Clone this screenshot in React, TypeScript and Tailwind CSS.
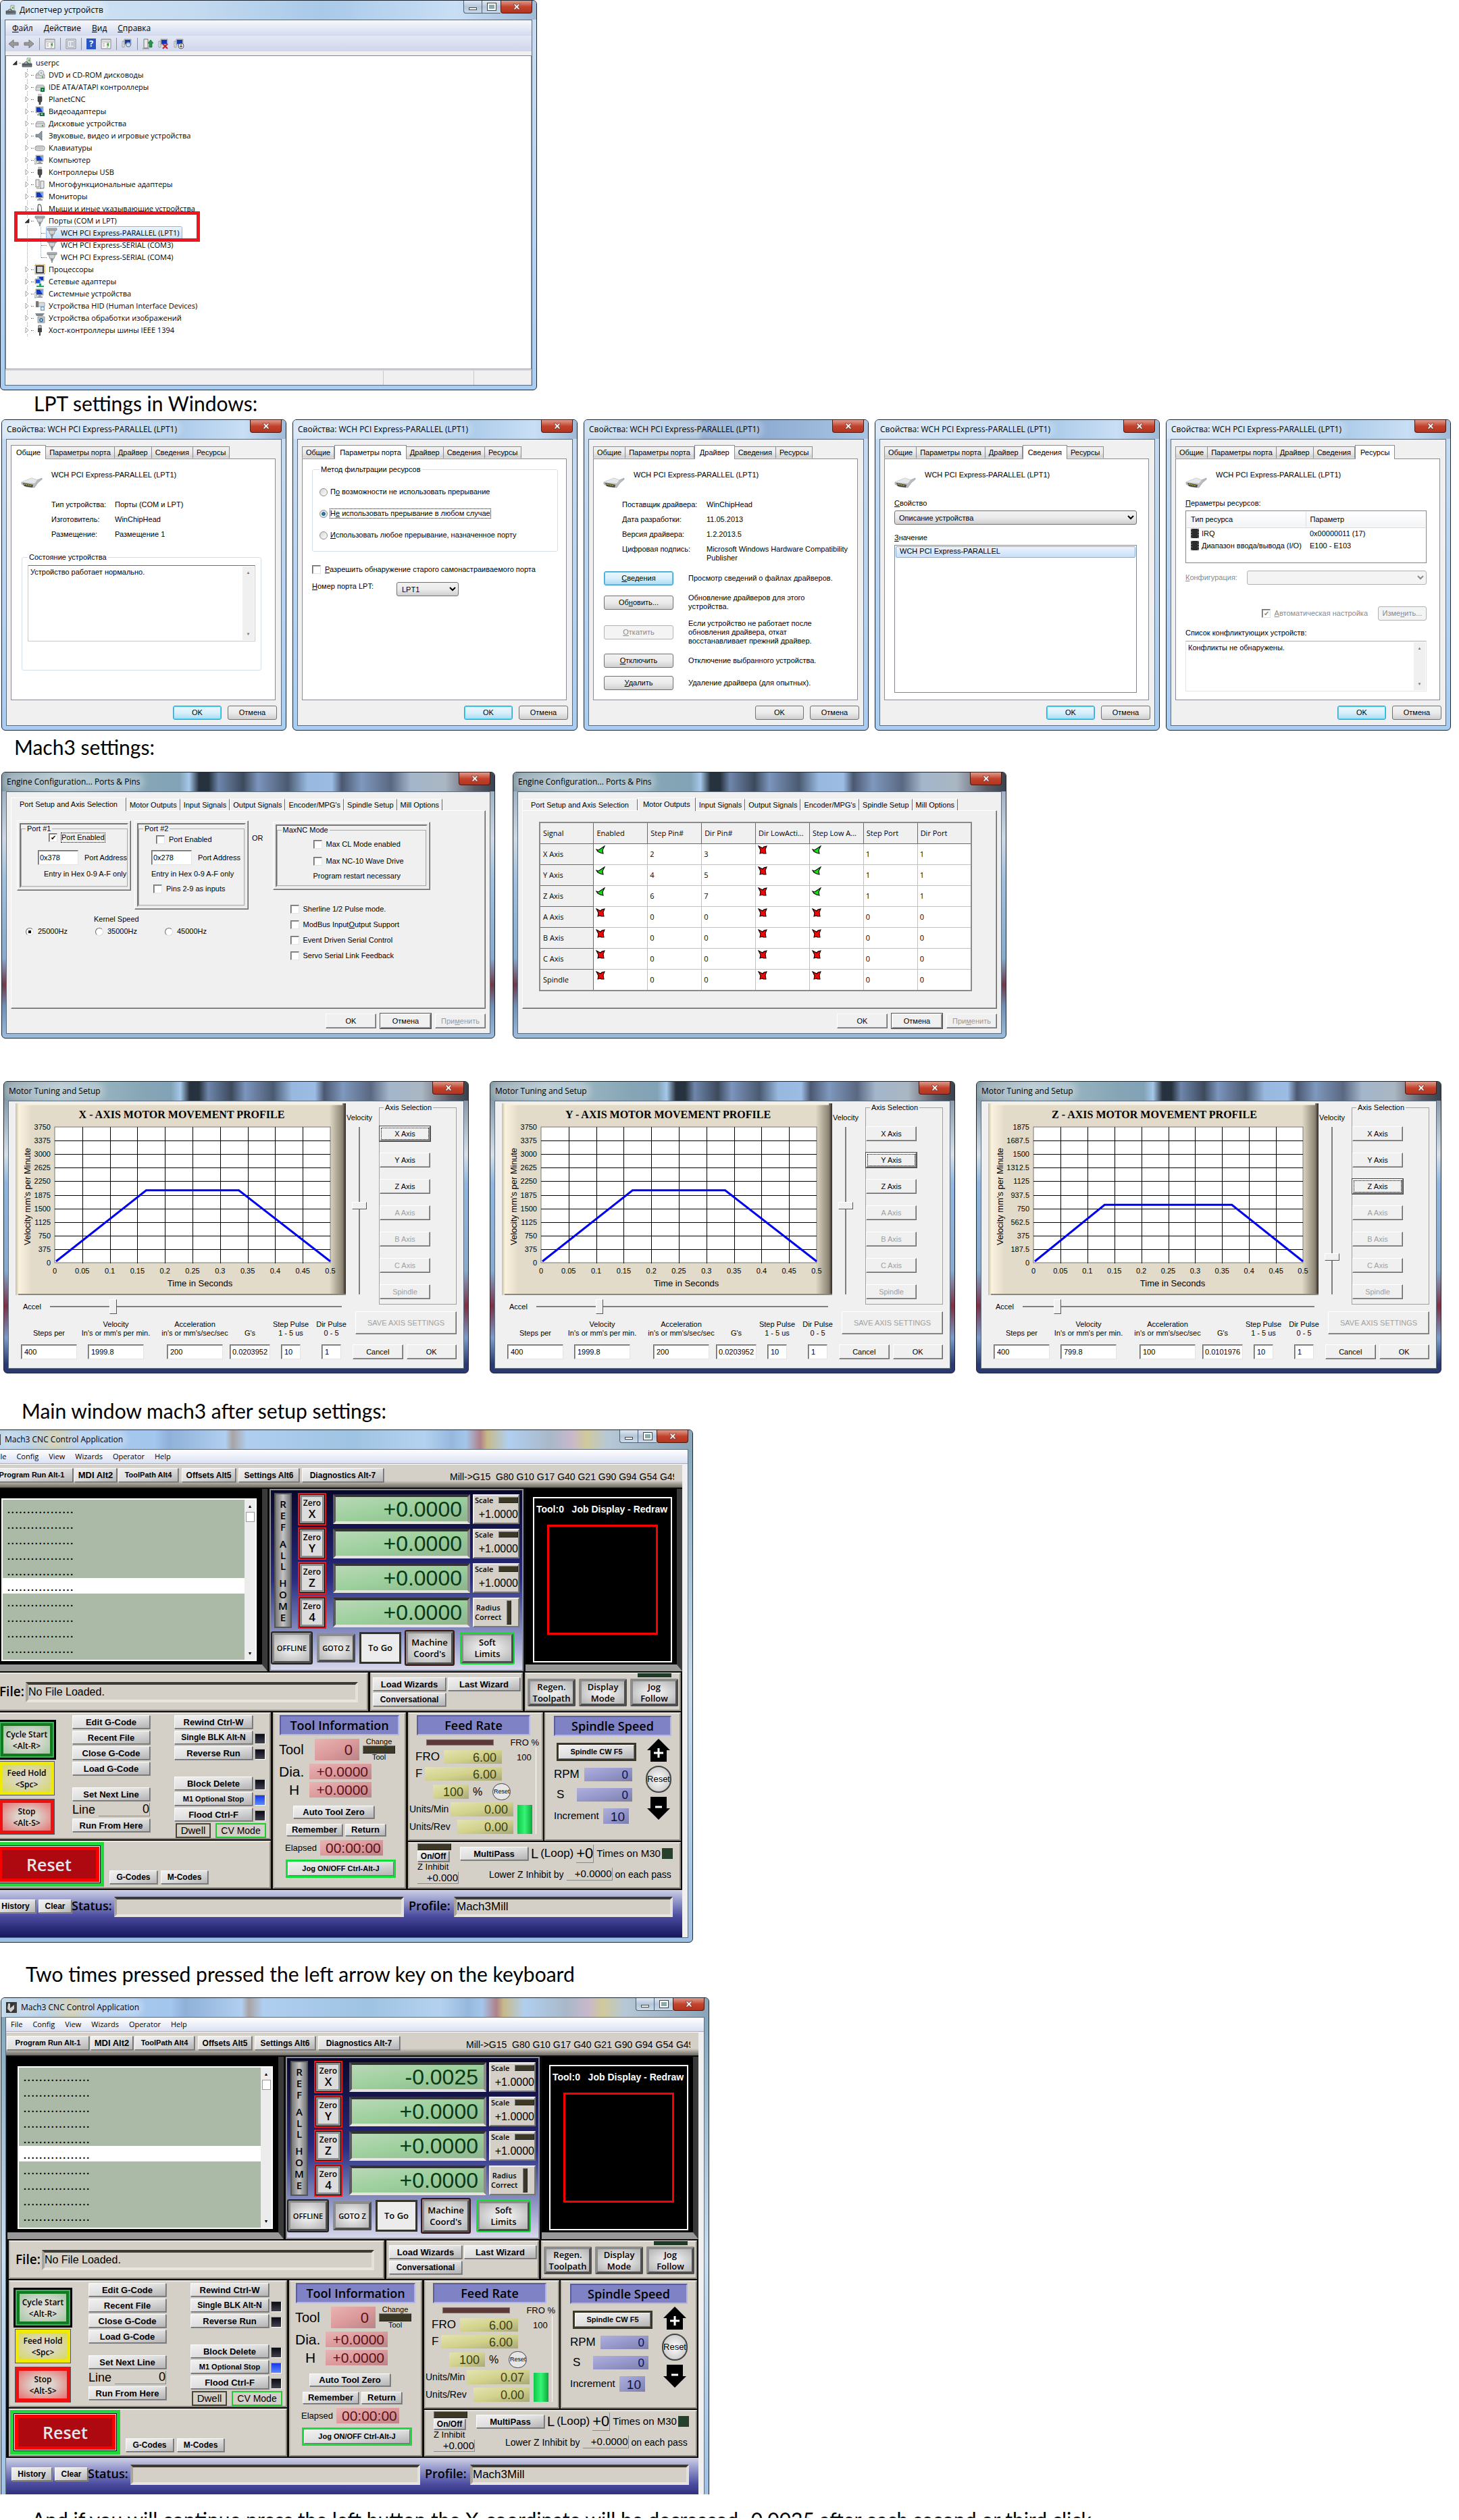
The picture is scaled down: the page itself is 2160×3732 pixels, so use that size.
import React from "react";
import clsx from "clsx";

const segoe = "font-['Open_Sans',sans-serif]";
const arial = "font-['Liberation_Sans',Arial,sans-serif]";

const raised =
  "border border-t-white border-l-white border-r-[#696969] border-b-[#696969] bg-[#f0f0f0] shadow-[inset_-1px_-1px_0_#a0a0a0]";
const sunken =
  "border border-t-[#696969] border-l-[#696969] border-r-[#e3e3e3] border-b-[#e3e3e3] bg-white shadow-[inset_1px_1px_0_#a0a0a0]";
const aeroButton =
  "h-[21px] rounded-[3px] border border-[#707070] bg-linear-to-b from-[#f2f2f2] via-[#ebebeb] to-[#cfcfcf] text-center";
const aeroDefault =
  "h-[21px] rounded-[3px] border border-[#3c9fcb] bg-linear-to-b from-[#eaf6fd] via-[#d9f0fc] to-[#a9daf2] text-center shadow-[inset_0_0_0_1px_#48d3f5]";

/* ---------- window chrome ---------- */

type FrameProps = {
  title: string;
  header: string;
  frame: string;
  full?: boolean;
  icon?: React.ReactNode;
  className?: string;
  children: React.ReactNode;
};

function CloseButton() {
  return (
    <button
      aria-label="Close"
      className="flex h-[19px] w-[47px] items-center justify-center rounded-b-[4px] border border-t-0 border-[#4a1a14] bg-linear-to-b from-[#dd9a8c] via-[#c3422c] to-[#b3341f]"
    >
      <svg viewBox="0 0 12 10" className="h-[10px] w-[12px]">
        <path
          d="M1 1h3l2 2.4L8 1h3L7.800 5 11 9H8L6 6.600 4 9H1l3.200-4z"
          fill="#fff"
          stroke="#5a3030"
          strokeWidth=".7"
        />
      </svg>
    </button>
  );
}

function Frame({ title, header, frame, full, icon, className, children }: FrameProps) {
  return (
    <section
      className={clsx(
        "flex flex-col overflow-hidden rounded-[6px] border border-[#1d2733] text-black",
        frame,
        className
      )}
    >
      <header className={clsx("flex h-[28px] shrink-0 items-start pr-[6px] pl-[7px]", header)}>
        {icon}
        <h2 className={`${segoe} mt-[5px] flex-1 text-[12px] leading-[18px] whitespace-nowrap`}>
          <span className="rounded-full bg-white/25 shadow-[0_0_8px_6px_rgba(255,255,255,0.25)]">
            {title}
          </span>
        </h2>
        {full && (
          <div className="flex h-[19px] overflow-hidden rounded-bl-[4px] border border-t-0 border-r-0 border-[#4c5f75] bg-linear-to-b from-[#dfe8f2] via-[#b5c6da] to-[#cbdaea]">
            <button aria-label="Minimize" className="flex w-[27px] justify-center border-r border-[#4c5f75] pt-[10px]">
              <span className="h-[4px] w-[12px] border border-[#444] bg-white" />
            </button>
            <button aria-label="Maximize" className="flex w-[27px] items-center justify-center">
              <span className="h-[10px] w-[12px] border-2 border-white bg-[#8aa] outline outline-[#444]" />
            </button>
          </div>
        )}
        <CloseButton />
      </header>
      <div className="mx-[6px] mb-[6px] flex flex-1 flex-col border border-[#5c6b7c] bg-[#f0f0f0]">
        {children}
      </div>
    </section>
  );
}

const aeroHeader =
  "bg-[linear-gradient(90deg,#d5e5f5_0%,#c5dbf0_35%,#a9c9e8_60%,#c9dff5_85%,#9fb9d6_100%)]";
const aeroFrame = "bg-linear-to-b from-[#c8dcf0] via-[#b9d5f2] to-[#a9cdf2]";
const machHeader =
  "bg-[linear-gradient(90deg,#7f95a0_0%,#a9c0ca_12%,#86a6b6_30%,#82a3b6_36%,#a6c8ea_38%,#26323d_40%,#26323d_42%,#6f86ab_44%,#3d4a5c_49%,#7c95bd_52%,#4a5a70_58%,#98b8e0_62%,#9cbce4_67%,#4b5870_69%,#7f98bd_73%,#5a6882_79%,#a3b6cb_83%,#aab6c2_90%,#5c5c66_96%,#39424f_100%)]";
const engineFrame =
  "bg-[linear-gradient(#8fa2b5_0%,#cdd8e2_25%,#a0c0dd_40%,#86abcd_70%,#703848_80%,#6f8fb5_88%,#9cbcdc_100%)]";
const motorFrame =
  "bg-[linear-gradient(#6f8294_0%,#d6e0e8_25%,#8fb6dc_35%,#86abcd_65%,#7b3045_77%,#7a9cc8_88%,#2b3a6e_97%)]";

/* ---------- form pieces ---------- */

function Check({ children, className, ...rest }: React.InputHTMLAttributes<HTMLInputElement>) {
  return (
    <label className={clsx("flex items-center whitespace-nowrap", className)}>
      <input
        type="checkbox"
        readOnly
        {...rest}
        className={`${sunken} relative mr-[6px] h-[13px] w-[13px] shrink-0 appearance-none checked:before:absolute checked:before:left-[2px] checked:before:text-[10px] checked:before:leading-[11px] checked:before:content-['✔']`}
      />
      {children}
    </label>
  );
}

function Tabs({ names, active }: { names: string[]; active: number }) {
  return (
    <div role="tablist" className="flex h-[21px] items-end">
      {names.map((name, i) => (
        <button
          key={name}
          role="tab"
          aria-selected={i === active}
          className={
            i === active
              ? "relative z-10 -mb-px h-[21px] border border-b-0 border-[#898c95] bg-white px-[7px] whitespace-nowrap"
              : "h-[18px] border border-l-0 border-[#898c95] border-b-transparent bg-linear-to-b from-[#f2f2f2] via-[#ebebeb] to-[#cfcfcf] px-[5px] whitespace-nowrap first:border-l"
          }
        >
          {name}
        </button>
      ))}
    </div>
  );
}

/* ---------- device manager ---------- */

type IconKind =
  | "pc" | "dvd" | "ide" | "usb" | "video" | "disk" | "sound" | "keyboard" | "system"
  | "multi" | "monitor" | "mouse" | "port" | "cpu" | "network" | "hid" | "camera" | "host";

function DeviceIcon({ kind }: { kind: IconKind }) {
  const screen = (
    <>
      <path d="M2 1h11v9H2z" fill="#c8ccd0" stroke="#777" strokeWidth=".6" />
      <path d="M3 2h9v7H3z" fill="#1238b8" />
      <path d="M8 2h4v7z" fill="#6f9cf0" />
      <path d="M6 10h4v2H6zM4 12h8v2H4z" fill="#9a9fa4" />
    </>
  );
  const drive = (
    <>
      <path d="M2 8l2-3h9l2 3v5H2z" fill="#d8dadc" stroke="#777" strokeWidth=".7" />
      <path d="M2 8h13" stroke="#888" strokeWidth=".7" />
      <path d="M11 10h2v2h-2z" fill="#33b033" />
    </>
  );
  return (
    <svg viewBox="0 0 16 16" className="h-[16px] w-[16px] shrink-0">
      {kind === "pc" && (
        <>
          <path d="M8 1h5v8H8z" fill="#e4e7ea" stroke="#777" strokeWidth=".7" />
          <path d="M10 3h2v3h-2z" fill="#4bbd3a" />
          <path d="M1 9h14v5H1z" fill="#75828e" stroke="#444" strokeWidth=".7" />
          <path d="M4 9c0-3 6-3 6 0M1 11h14" fill="none" stroke="#333" />
        </>
      )}
      {kind === "dvd" && (
        <>
          {drive}
          <circle cx="10" cy="5" r="4" fill="#dfe6ea" stroke="#889" strokeWidth=".7" />
          <circle cx="10" cy="5" r="1.200" fill="#9a9" />
        </>
      )}
      {kind === "ide" && (
        <>
          {drive}
          <path d="M9 9h6v6H9z" fill="#0c7a3a" />
          <path d="M11 11h2v2h-2z" fill="#8fd0a0" />
        </>
      )}
      {kind === "disk" && drive}
      {kind === "usb" && (
        <>
          <path d="M6 0h4v4H6z" fill="#d5d5d5" stroke="#888" strokeWidth=".6" />
          <path d="M5 4h6v7l-2 2v3H7v-3l-2-2z" fill="#4a4a4e" stroke="#222" strokeWidth=".5" />
        </>
      )}
      {kind === "host" && (
        <>
          <path d="M6 1h4v4H6z" fill="#d5d5d5" stroke="#555" />
          <path d="M5 5h6v6H5zM7 11h2v5H7z" fill="#444" />
        </>
      )}
      {kind === "video" && (
        <>
          {screen}
          <path d="M8 10h7v5H8z" fill="#0c7a3a" />
          <path d="M10 11h2v2h-2z" fill="#bfe0c4" />
        </>
      )}
      {kind === "sound" && <path d="M2 6h4l5-5v14l-5-5H2z" fill="#8c99a3" stroke="#55606a" strokeWidth=".7" />}
      {kind === "keyboard" && (
        <>
          <rect x="1" y="5" width="14" height="7" rx="3" fill="#dcdcdc" stroke="#777" strokeWidth=".8" />
          <path d="M3 7h10M3 9h10" stroke="#888" strokeDasharray="1 1" />
        </>
      )}
      {(kind === "system" || kind === "monitor") && screen}
      {kind === "system" && <path d="M0 6h3v8H0z" fill="#dfe2e4" stroke="#777" strokeWidth=".6" />}
      {kind === "multi" && (
        <path d="M2 1h5v11H2zM9 3h5v11H9zM3 14h7" fill="#e6e8ea" stroke="#777" strokeWidth=".9" />
      )}
      {kind === "mouse" && (
        <>
          <path d="M5 2c4-3 6 2 6 6s1 7 3 7H2c3-2 2-9 3-13z" fill="#55585c" />
          <path d="M6 3c2-2 4 1 4 5s-1 6-2 6-3-7-2-11z" fill="#f0f0f0" />
        </>
      )}
      {kind === "port" && (
        <>
          <path d="M1 1h14v3H1z" fill="#b4b8bb" stroke="#6a6f73" strokeWidth=".7" />
          <path d="M3 4h10l-2 6H5z" fill="#d0d3d5" stroke="#6a6f73" strokeWidth=".7" />
          <path d="M6 10h4v3H6zM7 13h2v3H7z" fill="#8f9599" />
        </>
      )}
      {kind === "cpu" && (
        <>
          <path d="M1 1h14v14H1z" fill="none" stroke="#b8862c" strokeWidth="1.500" strokeDasharray="1 1" />
          <path d="M2 2h12v12H2z" fill="#3e4246" />
          <path d="M4 4h8v8H4z" fill="#d3d6d8" />
        </>
      )}
      {kind === "network" && (
        <>
          <path d="M5 0h9v7H5z" fill="#c8ccd0" stroke="#777" strokeWidth=".6" />
          <path d="M7 1h6v5H7z" fill="#1238b8" />
          <path d="M1 4h8v7H1z" fill="#c8ccd0" stroke="#777" strokeWidth=".6" />
          <path d="M2 5h6v5H2z" fill="#1c50d8" />
          <path d="M7 11h3v3h4v2H3v-2h4z" fill="#22a75a" />
        </>
      )}
      {kind === "hid" && (
        <>
          <path d="M2 1h4v9H2z" fill="#777" />
          <path d="M6 3h9v6H6z" fill="#d8dadd" stroke="#777" strokeWidth=".6" />
          <path d="M9 9h6v6H9z" fill="#6f9fc8" />
          <circle cx="12" cy="12" r="2" fill="#eee" />
        </>
      )}
      {kind === "camera" && (
        <>
          <path d="M1 1h14l-3 4H3z" fill="#7f868c" />
          <path d="M5 6h10v9H5z" fill="#c3c9ce" stroke="#666" strokeWidth=".6" />
          <circle cx="10" cy="11" r="3" fill="#3977a8" />
          <circle cx="10" cy="11" r="1.200" fill="#cfe6f5" />
        </>
      )}
    </svg>
  );
}

type Device = { name: string; icon: IconKind; children?: string[] };

const devices: Device[] = [
  { name: "DVD и CD-ROM дисководы", icon: "dvd" },
  { name: "IDE ATA/ATAPI контроллеры", icon: "ide" },
  { name: "PlanetCNC", icon: "usb" },
  { name: "Видеоадаптеры", icon: "video" },
  { name: "Дисковые устройства", icon: "disk" },
  { name: "Звуковые, видео и игровые устройства", icon: "sound" },
  { name: "Клавиатуры", icon: "keyboard" },
  { name: "Компьютер", icon: "system" },
  { name: "Контроллеры USB", icon: "usb" },
  { name: "Многофункциональные адаптеры", icon: "multi" },
  { name: "Мониторы", icon: "monitor" },
  { name: "Мыши и иные указывающие устройства", icon: "mouse" },
  {
    name: "Порты (COM и LPT)",
    icon: "port",
    children: [
      "WCH PCI Express-PARALLEL (LPT1)",
      "WCH PCI Express-SERIAL (COM3)",
      "WCH PCI Express-SERIAL (COM4)",
    ],
  },
  { name: "Процессоры", icon: "cpu" },
  { name: "Сетевые адаптеры", icon: "network" },
  { name: "Системные устройства", icon: "system" },
  { name: "Устройства HID (Human Interface Devices)", icon: "hid" },
  { name: "Устройства обработки изображений", icon: "camera" },
  { name: "Хост-контроллеры шины IEEE 1394", icon: "host" },
];

function TreeArrow({ open }: { open?: boolean }) {
  return (
    <svg viewBox="0 0 10 10" className="h-[10px] w-[10px] shrink-0 bg-white">
      {open ? (
        <path d="M8 2v6H2z" fill="#333" stroke="#111" strokeWidth=".6" />
      ) : (
        <path d="M3 1l4 4-4 4z" fill="#fff" stroke="#a0a0a0" />
      )}
    </svg>
  );
}

function Toolbar() {
  const sep = <span className="h-[18px] w-px bg-[#8c8f98]" />;
  const list = (
    <svg viewBox="0 0 16 16" className="h-[16px] w-[16px]">
      <path d="M1 1h14v14H1z" fill="#f6f6f6" stroke="#888" />
      <path d="M1 2h14M2 5h12M10 6v8M3 8h3M3 11h3" stroke="#999" />
      <path d="M12 6v6L9 9z" fill="#3aa52f" />
    </svg>
  );
  const scan = (mark: React.ReactNode) => (
    <svg viewBox="0 0 16 16" className="h-[16px] w-[16px]">
      <path d="M1 4h3v9H1z" fill="#dfe2e4" stroke="#777" strokeWidth=".6" />
      <path d="M4 1h10v8H4z" fill="#c8ccd0" stroke="#777" strokeWidth=".6" />
      <path d="M5 2h8v6H5z" fill="#1238b8" />
      {mark}
    </svg>
  );
  return (
    <div className="flex h-[23px] items-center gap-[7px] bg-linear-to-b from-[#e4e8f4] to-[#cfd6ec] pl-[4px]">
      <svg viewBox="0 0 16 16" className="h-[16px] w-[16px]">
        <path d="M1 8l7-6v4h7v4H8v4z" fill="#9b9b9b" stroke="#777" />
      </svg>
      <svg viewBox="0 0 16 16" className="h-[16px] w-[16px]">
        <path d="M15 8L8 2v4H1v4h7v4z" fill="#9b9b9b" stroke="#777" />
      </svg>
      {sep}
      {list}
      {sep}
      <svg viewBox="0 0 16 16" className="h-[16px] w-[16px]">
        <path d="M1 1h14v14H1z" fill="#f6f6f6" stroke="#888" />
        <path d="M3 3h10v10H3zM5 6h2M8 6h4M5 8h2M8 8h4M5 10h2M8 10h4" fill="none" stroke="#8a99b0" />
      </svg>
      {sep}
      <span className="flex h-[16px] w-[14px] items-center justify-center bg-[#2a55c4] text-[13px] font-bold text-white">
        ?
      </span>
      {list}
      {sep}
      {scan(<circle cx="10" cy="9" r="3.500" fill="#cfe2f2" fillOpacity=".8" stroke="#667" />)}
      {sep}
      <svg viewBox="0 0 16 16" className="h-[16px] w-[16px]">
        <path d="M2 1h6v13H2zM0 15h10" fill="#e6e8ea" stroke="#777" />
        <path d="M12 2l4 5h-2v6h-4V7H8z" fill="#1f9a3f" stroke="#0b5c22" strokeWidth=".6" />
      </svg>
      {scan(<path d="M7 8l7 7M14 8l-7 7" stroke="#e01818" strokeWidth="2.200" />)}
      {scan(
        <>
          <circle cx="11" cy="11" r="4" fill="#eee" stroke="#555" />
          <path d="M11 8v5M9 11l2 2 2-2" fill="none" stroke="#333" />
        </>
      )}
    </div>
  );
}

function DeviceManager() {
  return (
    <Frame
      title="Диспетчер устройств"
      header={aeroHeader}
      frame={aeroFrame}
      full
      className="h-[578px] w-full max-w-[795px]"
      icon={
        <span className="mt-[6px] mr-[5px]">
          <DeviceIcon kind="pc" />
        </span>
      }
    >
      <nav className={`${segoe} flex h-[23px] items-center gap-[16px] bg-linear-to-b from-[#f7f8fc] to-[#d3daee] pl-[10px] text-[12px]`}>
        <a href="#file"><u>Ф</u>айл</a>
        <a href="#action"><u>Д</u>ействие</a>
        <a href="#view"><u>В</u>ид</a>
        <a href="#help"><u>С</u>правка</a>
      </nav>
      <Toolbar />
      <div className={`${segoe} relative mt-[6px] flex-1 border border-[#828790] bg-white pt-px text-[11px] leading-[18px] whitespace-nowrap`}>
        <div className="flex h-[18px] items-center pl-[8px]">
          <TreeArrow open />
          <span className="mr-[1px] ml-[1px] w-[3px] border-t border-dotted border-gray-500" />
          <DeviceIcon kind="pc" />
          <span className="ml-[5px]">userpc</span>
        </div>
        <ul className="ml-[31px] border-l border-dotted border-gray-400">
          {devices.map((d) => (
            <li key={d.name} className="-ml-[6px]">
              <div className="flex h-[18px] items-center">
                <TreeArrow open={!!d.children} />
                <span className="mr-[1px] ml-[1px] w-[4px] border-t border-dotted border-gray-500" />
                <DeviceIcon kind={d.icon} />
                <span className="ml-[5px]">{d.name}</span>
              </div>
              {d.children && (
                <ul className="mb-[9px] ml-[25px] h-[45px] border-l border-dotted border-gray-400">
                  {d.children.map((name, i) => (
                    <li key={name} className="flex h-[18px] items-center">
                      <span className="w-[8px] border-t border-dotted border-gray-500" />
                      <span
                        className={clsx(
                          "flex h-[18px] items-center rounded-[2px] pr-[3px]",
                          i === 0 &&
                            "bg-linear-to-b from-[#ecf4fd] to-[#c6dffa] shadow-[0_0_0_1px_#8fb8e6]"
                        )}
                      >
                        <DeviceIcon kind="port" />
                        <span className="ml-[5px]">{name}</span>
                      </span>
                    </li>
                  ))}
                </ul>
              )}
            </li>
          ))}
        </ul>
        {/* marks the port that has to be configured */}
        <div className="absolute top-[230px] left-[12px] h-[45px] w-[275px] border-[5px] border-[#ee1520]" />
      </div>
      <footer className="mt-px flex h-[22px] justify-end border-t border-[#d0d0d0]">
        <span className="w-[134px] border-l border-[#c8c8c8]" />
        <span className="w-[86px] border-x border-[#c8c8c8]" />
      </footer>
    </Frame>
  );
}

/* ---------- port property sheets ---------- */

const sheetTabs = ["Общие", "Параметры порта", "Драйвер", "Сведения", "Ресурсы"];

function Sheet({ active, plainOk, children }: { active: number; plainOk?: boolean; children: React.ReactNode }) {
  return (
    <Frame
      title="Свойства: WCH PCI Express-PARALLEL (LPT1)"
      header={
        active === 2
          ? "bg-[linear-gradient(90deg,#c9dcf0_0%,#a3bcd8_40%,#7f9fc8_42%,#a9c4e4_100%)]"
          : aeroHeader
      }
      frame={aeroFrame}
      className="h-[461px] max-w-[422px] flex-1"
    >
      <div className={`${arial} flex flex-1 flex-col px-[6px] pt-[7px] pb-[8px] text-[11px] leading-[13px]`}>
        <Tabs names={sheetTabs} active={active} />
        <div className="mr-[2px] flex flex-1 flex-col border border-[#898c95] bg-white">{children}</div>
        <div className="mt-[8px] flex justify-end gap-[9px]">
          <button className={clsx(plainOk ? aeroButton : aeroDefault, "w-[72px]")}>OK</button>
          <button className={clsx(aeroButton, "w-[73px]")}>Отмена</button>
        </div>
      </div>
    </Frame>
  );
}

function PortHeader() {
  return (
    <div className="flex h-[56px] shrink-0 pt-[17px] pl-[14px]">
      <svg viewBox="0 0 32 16" className="mt-[10px] h-[16px] w-[32px]">
        <path d="M1 7l15-6 8 3 7-3v2l-6 5-5 7-12-1L1 10z" fill="#b9bdc2" stroke="#8b9096" strokeWidth=".6" />
        <path d="M1 7l15-6 8 3-4 5z" fill="#e6e8ea" />
        <path d="M3 8l15 3-1 4-12-2z" fill="#44463a" />
        <path d="M5 10l11 2.500" stroke="#d6d24a" strokeWidth="1.500" strokeDasharray="1.500 1.200" />
      </svg>
      <span className="ml-[13px]">WCH PCI Express-PARALLEL (LPT1)</span>
    </div>
  );
}

function ScrollText({ text, label, className }: { text: string; label: string; className: string }) {
  return (
    <div className={clsx("flex border bg-white p-px", className)}>
      <textarea readOnly aria-label={label} className="flex-1 resize-none p-[2px]" value={text} />
      <div className="flex w-[17px] flex-col items-center justify-between bg-[#f0f0f0] py-[5px] text-[6px] leading-[8px] text-[#777]">
        <span>▲</span>
        <span>▼</span>
      </div>
    </div>
  );
}

function Facts({ rows, className, labelClass }: { rows: string[][]; className: string; labelClass: string }) {
  return (
    <dl className={className}>
      {rows.map(([label, value]) => (
        <div key={label} className="flex min-h-[22px] pt-[5px]">
          <dt className={labelClass}>{label}</dt>
          <dd className="max-w-[210px]">{value}</dd>
        </div>
      ))}
    </dl>
  );
}

const driverActions = [
  { button: <><u>С</u>ведения</>, text: "Просмотр сведений о файлах драйверов.", focus: true },
  { button: <>Об<u>н</u>овить...</>, text: "Обновление драйверов для этого устройства." },
  {
    button: <><u>О</u>ткатить</>,
    text: "Если устройство не работает после обновления драйвера, откат восстанавливает прежний драйвер.",
    disabled: true,
  },
  { button: <><u>О</u>тключить</>, text: "Отключение выбранного устройства." },
  { button: <><u>У</u>далить</>, text: "Удаление драйвера (для опытных)." },
];

function PropertySheets() {
  return (
    <div className="flex gap-[9px] pl-[2px]">
      <Sheet active={0}>
        <PortHeader />
        <Facts
          className="pl-[59px]"
          labelClass="w-[94px]"
          rows={[
            ["Тип устройства:", "Порты (COM и LPT)"],
            ["Изготовитель:", "WinChipHead"],
            ["Размещение:", "Размещение 1"],
          ]}
        />
        <fieldset className="mt-[17px] mr-[20px] ml-[15px] h-[174px] rounded-[3px] border border-[#d5dfe5] px-[8px]">
          <legend className="px-[2px]">Состояние устройства</legend>
          <ScrollText
            label="Состояние устройства"
            text="Устройство работает нормально."
            className="mt-[5px] h-[113px] border-[#b5cfe7] border-t-[#3d7bad]"
          />
        </fieldset>
      </Sheet>

      <Sheet active={1}>
        <fieldset className="mt-[9px] mr-[12px] ml-[14px] flex h-[128px] flex-col rounded-[3px] border border-[#d5dfe5] px-[6px]">
          <legend className="ml-[4px] px-[2px]">Метод фильтрации ресурсов</legend>
          <div className="flex flex-col gap-[19px] pt-[20px]">
            {[
              <span key="a">П<u>о</u> возможности не использовать прерывание</span>,
              <span key="b" className="outline outline-dotted outline-black">
                Н<u>е</u> использовать прерывание в любом случае
              </span>,
              <span key="c"><u>И</u>спользовать любое прерывание, назначенное порту</span>,
            ].map((text, i) => (
              <label key={i} className="flex h-[13px] items-center whitespace-nowrap">
                <input
                  type="radio"
                  name="irq"
                  readOnly
                  checked={i === 1}
                  className="mr-[4px] ml-[4px] h-[12px] w-[12px] shrink-0 appearance-none rounded-full border border-[#8e8f8f] bg-linear-to-br from-[#d5d5d5] to-white checked:bg-[radial-gradient(circle,#3fb4e6_0,#12496b_32%,#dfe8ec_45%)]"
                />
                {text}
              </label>
            ))}
          </div>
        </fieldset>
        <Check className="mt-[20px] ml-[14px] h-[13px]">
          <span><u>Р</u>азрешить обнаружение старого самонастраиваемого порта</span>
        </Check>
        <div className="mt-[12px] flex pl-[14px]">
          <label htmlFor="lpt" className="w-[125px]"><u>Н</u>омер порта LPT:</label>
          <select id="lpt" className={`${aeroButton} w-[92px] px-[3px] text-left`}>
            <option>LPT1</option>
          </select>
        </div>
      </Sheet>

      <Sheet active={2} plainOk>
        <PortHeader />
        <Facts
          className="h-[110px] pl-[42px]"
          labelClass="w-[125px] shrink-0"
          rows={[
            ["Поставщик драйвера:", "WinChipHead"],
            ["Дата разработки:", "11.05.2013"],
            ["Версия драйвера:", "1.2.2013.5"],
            ["Цифровая подпись:", "Microsoft Windows Hardware Compatibility Publisher"],
          ]}
        />
        <ul className="flex flex-col gap-[12px] pl-[15px]">
          {driverActions.map((a) => (
            <li key={a.text} className="flex items-center">
              <button
                disabled={a.disabled}
                className={clsx(
                  a.focus ? aeroDefault : aeroButton,
                  "w-[103px] shrink-0 disabled:border-[#adb2b5] disabled:from-[#f4f4f4] disabled:via-[#f4f4f4] disabled:to-[#f4f4f4] disabled:text-[#8a8a8a]"
                )}
              >
                {a.button}
              </button>
              <span className="ml-[22px] max-w-[215px]">{a.text}</span>
            </li>
          ))}
        </ul>
      </Sheet>

      <Sheet active={3}>
        <PortHeader />
        <div className="flex flex-1 flex-col pr-[17px] pl-[14px]">
          <label htmlFor="prop" className="mt-[3px]"><u>С</u>войство</label>
          <select id="prop" className={`${aeroButton} mt-[4px] w-full px-[2px] text-left`}>
            <option>Описание устройства</option>
          </select>
          <span className="mt-[13px]"><u>З</u>начение</span>
          <ul className="mt-[4px] h-[219px] border border-[#828790] p-px">
            <li className="h-[17px] rounded-[2px] border border-[#84acdd] bg-linear-to-b from-[#ecf4fd] to-[#c9dffa] px-[5px]">
              WCH PCI Express-PARALLEL
            </li>
          </ul>
        </div>
      </Sheet>

      <Sheet active={4}>
        <PortHeader />
        <div className="flex flex-1 flex-col pr-[19px] pl-[14px]">
          <span className="mt-[3px]"><u>П</u>ераметры ресурсов:</span>
          <div className="mt-[4px] h-[78px] border border-[#828790] p-px">
            <table className="w-full text-left">
              <thead>
                <tr className="h-[23px] border-b border-[#d5d5d5] bg-linear-to-b from-white to-[#f3f4f6]">
                  <th className="w-[176px] border-r border-[#dedfe1] pl-[6px] font-normal">Тип ресурса</th>
                  <th className="pl-[6px] font-normal">Параметр</th>
                </tr>
              </thead>
              <tbody>
                {[
                  ["IRQ", "0x00000011 (17)"],
                  ["Диапазон ввода/вывода (I/O)", "E100 - E103"],
                ].map(([type, value]) => (
                  <tr key={type} className="h-[18px]">
                    <td className="whitespace-nowrap">
                      <span className="flex items-center">
                        <span className="mr-[4px] ml-[6px] h-[14px] w-[12px] shrink-0 border-x-2 border-dotted border-[#666] bg-[#2c2c2c]" />
                        {type}
                      </span>
                    </td>
                    <td className="pl-[6px]">{value}</td>
                  </tr>
                ))}
              </tbody>
            </table>
          </div>
          <div className="mt-[11px] flex items-center text-[#8a8a8a]">
            <label htmlFor="conf" className="w-[91px]"><u>К</u>онфигурация:</label>
            <select id="conf" disabled className="h-[21px] flex-1 rounded-[3px] border border-[#adb2b5] bg-[#f4f4f4]" />
          </div>
          <div className="mt-[32px] flex items-center justify-end text-[#8a8a8a]">
            <Check defaultChecked disabled className="mr-[15px]">
              <span><u>А</u>втоматическая настройка</span>
            </Check>
            <button disabled className="h-[21px] w-[72px] rounded-[3px] border border-[#adb2b5] bg-[#f4f4f4]">
              Изме<u>н</u>ить...
            </button>
          </div>
          <span className="mt-[12px]">Список конфликтующих устройств:</span>
          <ScrollText
            label="Список конфликтующих устройств"
            text="Конфликты не обнаружены."
            className="mt-[5px] h-[75px] border-[#e3e3e3] border-t-[#abadb3]"
          />
        </div>
      </Sheet>
    </div>
  );
}

/* ---------- Mach3 ports & pins ---------- */

const engineTabs = [
  "Port Setup and Axis Selection",
  "Motor Outputs",
  "Input Signals",
  "Output Signals",
  "Encoder/MPG's",
  "Spindle Setup",
  "Mill Options",
];

function EngineWindow({ active, children }: { active: number; children: React.ReactNode }) {
  return (
    <Frame
      title="Engine Configuration... Ports & Pins"
      header={machHeader}
      frame={engineFrame}
      className="h-[395px] w-full max-w-[731px]"
    >
      <div className={`${arial} flex flex-1 flex-col px-[6px] pt-[8px] pb-[7px] text-[11px] leading-[13px]`}>
        <div role="tablist" className="flex h-[19px] items-end">
          {engineTabs.map((name, i) => (
            <button
              key={name}
              role="tab"
              aria-selected={i === active}
              className={clsx(
                "border-t border-r border-l border-t-white border-r-[#696969] border-l-white whitespace-nowrap first:px-[12px]",
                i === active
                  ? "relative z-10 -mb-px h-[20px] bg-[#f0f0f0] px-[7px]"
                  : "h-[17px] px-[4px]"
              )}
            >
              {name}
            </button>
          ))}
        </div>
        <div className="flex flex-1 border border-t-white border-r-[#696969] border-b-[#696969] border-l-white shadow-[inset_-1px_-1px_0_#a0a0a0]">
          {children}
        </div>
        <div className="mt-[7px] flex justify-end gap-[6px]">
          <button className={`${raised} h-[22px] w-[75px]`}>OK</button>
          <button className={`${raised} h-[22px] w-[75px] outline outline-[#555]`}>Отмена</button>
          <button disabled className={`${raised} h-[22px] w-[75px] text-[#9a9a9a]`}>
            При<u>м</u>енить
          </button>
        </div>
      </div>
    </Frame>
  );
}

function PortBox({ title, className, children }: { title: string; className: string; children: React.ReactNode }) {
  return (
    <div className={clsx(raised, "p-[3px]", className)}>
      <div className="h-full border-2 border-t-[#777] border-r-[#e8e8e8] border-b-[#e8e8e8] border-l-[#777]">
        <fieldset className="h-full border border-[#a8a8a8]">
          <legend className="ml-[6px] px-[2px]">{title}</legend>
          {children}
        </fieldset>
      </div>
    </div>
  );
}

function PortSetup() {
  return (
    <EngineWindow active={0}>
      <div className="pt-[14px] pl-[8px]">
        <div className="flex items-start gap-[5px]">
          <PortBox title="Port #1" className="h-[104px] w-[169px]">
            <Check defaultChecked className="ml-[40px]">
              <span className="outline outline-dotted outline-black">Port Enabled</span>
            </Check>
            <label className="mt-[12px] ml-[24px] flex items-center gap-[9px] whitespace-nowrap">
              <input readOnly value="0x378" className={`${sunken} h-[22px] w-[60px] px-[2px]`} />
              Port Address
            </label>
            <p className="mt-[7px] ml-[33px] whitespace-nowrap">Entry in Hex 0-9 A-F only</p>
          </PortBox>
          <PortBox title="Port #2" className="h-[132px] w-[169px]">
            <Check className="mt-[3px] ml-[25px]">Port Enabled</Check>
            <label className="mt-[9px] ml-[18px] flex items-center gap-[9px] whitespace-nowrap">
              <input readOnly value="0x278" className={`${sunken} h-[22px] w-[60px] px-[2px]`} />
              Port Address
            </label>
            <p className="mt-[7px] ml-[18px] whitespace-nowrap">Entry in Hex 0-9 A-F only</p>
            <Check className="mt-[9px] ml-[21px]">Pins 2-9 as inputs</Check>
          </PortBox>
          <span className="mt-[20px]">OR</span>
        </div>
        <p className="mt-[8px] ml-[114px]">Kernel Speed</p>
        <div className="mt-[5px] flex pl-[13px]">
          {["25000Hz", "35000Hz", "45000Hz"].map((hz, i) => (
            <label key={hz} className="flex w-[103px] items-center">
              <input
                type="radio"
                name="kernel"
                readOnly
                checked={i === 0}
                className="mr-[6px] h-[12px] w-[12px] appearance-none rounded-full border border-t-[#696969] border-r-[#ddd] border-b-[#ddd] border-l-[#696969] bg-white checked:bg-[radial-gradient(circle,#000_0,#000_30%,#fff_35%)]"
              />
              {hz}
            </label>
          ))}
        </div>
      </div>
      <div className="ml-[14px] pt-[16px]">
        <PortBox title="MaxNC Mode" className="h-[101px] w-[233px]">
          <Check className="mt-[8px] ml-[53px]">Max CL Mode enabled</Check>
          <Check className="mt-[12px] ml-[53px]">Max NC-10 Wave Drive</Check>
          <p className="mt-[9px] ml-[53px]">Program restart necessary</p>
        </PortBox>
        <div className="mt-[22px] ml-[26px] flex flex-col gap-[10px]">
          <Check>Sherline 1/2 Pulse mode.</Check>
          <Check><span>ModBus Input<u>O</u>utput Support</span></Check>
          <Check>Event Driven Serial Control</Check>
          <Check>Servo Serial Link Feedback</Check>
        </div>
      </div>
    </EngineWindow>
  );
}

const motorColumns = [
  "Signal", "Enabled", "Step Pin#", "Dir Pin#", "Dir LowActi...", "Step Low A...", "Step Port", "Dir Port",
];

type MotorRow = [string, boolean, number, number, boolean, boolean, number, number];

const motorRows: MotorRow[] = [
  ["X Axis", true, 2, 3, false, true, 1, 1],
  ["Y Axis", true, 4, 5, false, true, 1, 1],
  ["Z Axis", true, 6, 7, false, true, 1, 1],
  ["A Axis", false, 0, 0, false, false, 0, 0],
  ["B Axis", false, 0, 0, false, false, 0, 0],
  ["C Axis", false, 0, 0, false, false, 0, 0],
  ["Spindle", false, 0, 0, false, false, 0, 0],
];

function Mark({ on }: { on: boolean }) {
  return (
    <svg viewBox="0 0 14 13" className="mt-[2px] ml-[3px] h-[13px] w-[14px]">
      {on ? (
        <path d="M1 6l3 1 9-6-3 6 1 5-4-1-4-2z" fill="#12e012" stroke="#000" strokeWidth="1.100" />
      ) : (
        <path d="M1 1l4 2 2 1 2-2 4-1-2 5 1 6-4 0-1-1-4 1 1-5z" fill="#f00808" stroke="#000" strokeWidth="1.100" />
      )}
    </svg>
  );
}

function MotorOutputs() {
  return (
    <EngineWindow active={1}>
      <div className="w-full pt-[16px] pr-[36px] pl-[24px]">
        <table className={`${segoe} w-full table-fixed border-2 border-[#8a8a8a] text-left text-[11px]`}>
          <thead>
            <tr className="h-[31px]">
              {motorColumns.map((c) => (
                <th
                  key={c}
                  className="border-r border-b border-[#696969] bg-[#f0f0f0] pl-[4px] font-normal whitespace-nowrap"
                >
                  {c}
                </th>
              ))}
            </tr>
          </thead>
          <tbody>
            {motorRows.map(([name, ...cells]) => (
              <tr key={name} className="h-[30px]">
                <th className="border-r border-b border-[#696969] bg-[#f0f0f0] pl-[4px] font-normal">{name}</th>
                {cells.map((cell, i) => (
                  <td key={i} className="border-r border-b border-[#c0c0c0] bg-white p-0">
                    {typeof cell === "boolean" ? (
                      <div className="h-[28px]">
                        <Mark on={cell} />
                      </div>
                    ) : (
                      <span className="pl-[3px]">{cell}</span>
                    )}
                  </td>
                ))}
              </tr>
            ))}
          </tbody>
        </table>
      </div>
    </EngineWindow>
  );
}

/* ---------- motor tuning ---------- */

type Tuning = {
  axis: string;
  max: number;
  velocity: number;
  accel: number;
  gs: string;
  ramp: number;
  left: number;
  velocitySlider: number;
  accelSlider: number;
};

const tunings: Tuning[] = [
  { axis: "X", max: 3750, velocity: 1999.8, accel: 200, gs: "0.0203952", ramp: 0.166, left: 58, velocitySlider: 53, accelSlider: 21 },
  { axis: "Y", max: 3750, velocity: 1999.8, accel: 200, gs: "0.0203952", ramp: 0.166, left: 58, velocitySlider: 53, accelSlider: 21 },
  { axis: "Z", max: 1875, velocity: 799.8, accel: 100, gs: "0.0101976", ramp: 0.132, left: 67, velocitySlider: 21, accelSlider: 11 },
];

function Profile({ t }: { t: Tuning }) {
  const top = 35;
  const bottom = 236;
  const right = 466;
  const x = (s: number) => t.left + ((right - t.left) * s) / 0.5;
  const y = (v: number) => bottom - ((bottom - top) * v) / t.max;
  const steps = Array.from({ length: 11 }, (_, i) => i);
  return (
    <svg viewBox="0 0 489 284" className="mt-[3px] ml-[10px] h-[284px] w-[489px]">
      <defs>
        <linearGradient id={`panel-${t.axis}`}>
          <stop offset="0" stopColor="#c9bda5" />
          <stop offset=".01" stopColor="#fbf2df" />
          <stop offset=".05" stopColor="#e3dbca" />
          <stop offset=".95" stopColor="#e3dbca" />
          <stop offset=".99" stopColor="#8b8372" />
          <stop offset="1" stopColor="#2c2822" />
        </linearGradient>
      </defs>
      <rect width="489" height="284" fill={`url(#panel-${t.axis})`} />
      <path d="M4 1h480" stroke="#f8f0de" strokeWidth="3" />
      <path d="M4 283h485" stroke="#8f8775" strokeWidth="2" />
      <text x="246" y="22" textAnchor="middle" fontSize="16" fontWeight="700" fontFamily="Liberation Serif, serif">
        {t.axis} - AXIS MOTOR MOVEMENT PROFILE
      </text>
      <rect x={t.left} y={top} width={right - t.left} height={bottom - top} fill="#fff" stroke="#777" />
      {steps.map((i) => (
        <g key={i} fontSize="11" fontFamily="Liberation Sans, Arial, sans-serif">
          {i > 0 && i < 10 && (
            <path
              d={`M${Math.round(x(i * 0.05))} ${top}V${bottom + 1}M${t.left} ${Math.round(y((t.max * i) / 10))}H${right}`}
              stroke="#000"
              shapeRendering="crispEdges"
            />
          )}
          <text x={x(i * 0.05)} y={bottom + 16} textAnchor="middle">
            {+(i * 0.05).toFixed(2)}
          </text>
          <text x={t.left - 6} y={y((t.max * i) / 10) + 4} textAnchor="end">
            {(t.max * i) / 10}
          </text>
        </g>
      ))}
      <polyline
        points={`${t.left + 2},${bottom - 2} ${x(t.ramp)},${y(t.velocity)} ${x(0.5 - t.ramp)},${y(t.velocity)} ${right},${bottom - 2}`}
        fill="none"
        stroke="#0000f0"
        strokeWidth="3"
      />
      <g fontSize="13" fontFamily="Liberation Sans, Arial, sans-serif">
        <text x="273" y="271" textAnchor="middle">Time in Seconds</text>
        <text transform="translate(22 138) rotate(-90)" textAnchor="middle">
          Velocity mm's per Minute
        </text>
      </g>
    </svg>
  );
}

function MotorTuning({ t }: { t: Tuning }) {
  const field = "flex flex-col items-center justify-end whitespace-nowrap text-center";
  const box = `${sunken} mt-[10px] h-[22px] w-full`;
  return (
    <Frame
      title="Motor Tuning and Setup"
      header={machHeader}
      frame={motorFrame}
      className="h-[433px] w-full max-w-[689px]"
    >
      <div className={`${arial} flex text-[11px] leading-[13px]`}>
        <div className="w-[500px] shrink-0">
          <Profile t={t} />
          <label className="mt-[6px] flex items-center pl-[21px]">
            <span className="w-[40px]">Accel</span>
            <input
              type="range"
              readOnly
              value={t.accelSlider}
              className="h-[22px] w-[432px] appearance-none bg-[linear-gradient(#808080,#808080)] bg-[length:100%_2px] bg-center bg-no-repeat [&::-webkit-slider-thumb]:h-[22px] [&::-webkit-slider-thumb]:w-[11px] [&::-webkit-slider-thumb]:appearance-none [&::-webkit-slider-thumb]:border [&::-webkit-slider-thumb]:border-t-white [&::-webkit-slider-thumb]:border-r-[#555] [&::-webkit-slider-thumb]:border-b-[#555] [&::-webkit-slider-thumb]:border-l-white [&::-webkit-slider-thumb]:bg-[#f0f0f0]"
            />
          </label>
          <div className="flex h-[67px] pl-[18px]">
            <label className={`${field} w-[83px]`}>
              Steps per
              <input readOnly value="400" className={`${box} px-[4px]`} />
            </label>
            <label className={`${field} ml-[16px] w-[83px]`}>
              <span>Velocity<br />In's or mm's per min.</span>
              <input readOnly value={t.velocity} className={`${box} px-[4px]`} />
            </label>
            <label className={`${field} ml-[34px] w-[83px]`}>
              <span>Acceleration<br />in's or mm's/sec/sec</span>
              <input readOnly value={t.accel} className={`${box} px-[4px]`} />
            </label>
            <label className={`${field} ml-[10px] w-[60px]`}>
              G's
              <input disabled value={t.gs} className={`${box} bg-[#f0f0f0] pl-[3px]`} />
            </label>
            <label className={`${field} ml-[16px] w-[29px]`}>
              <span>Step Pulse<br />1 - 5 us</span>
              <input readOnly value="10" className={`${box} px-[4px]`} />
            </label>
            <label className={`${field} ml-[31px] w-[29px]`}>
              <span>Dir Pulse<br />0 - 5</span>
              <input readOnly value="1" className={`${box} px-[4px]`} />
            </label>
          </div>
        </div>
        <div className="flex flex-1 flex-col pr-[10px]">
          <div className="flex justify-between">
            <label className="flex w-[38px] flex-col items-center pt-[18px]">
              Velocity
              <input
                type="range"
                readOnly
                value={t.velocitySlider}
                className="mt-[7px] h-[248px] w-[22px] appearance-none bg-[linear-gradient(#808080,#808080)] bg-[length:2px_100%] bg-center bg-no-repeat [direction:rtl] [writing-mode:vertical-lr] [&::-webkit-slider-thumb]:h-[11px] [&::-webkit-slider-thumb]:w-[22px] [&::-webkit-slider-thumb]:appearance-none [&::-webkit-slider-thumb]:border [&::-webkit-slider-thumb]:border-t-white [&::-webkit-slider-thumb]:border-r-[#555] [&::-webkit-slider-thumb]:border-b-[#555] [&::-webkit-slider-thumb]:border-l-white [&::-webkit-slider-thumb]:bg-[#f0f0f0]"
              />
            </label>
            <fieldset className="mt-[3px] h-[298px] w-[115px] border border-[#a0a0a0]">
              <legend className="ml-[6px] px-[2px]">Axis Selection</legend>
              <div className="flex flex-col gap-[17px] pt-[21px]">
                {["X Axis", "Y Axis", "Z Axis", "A Axis", "B Axis", "C Axis", "Spindle"].map((name, i) => (
                  <button
                    key={name}
                    disabled={i > 2}
                    className={clsx(
                      raised,
                      "h-[22px] w-[75px] p-[2px] disabled:text-[#a0a0a0]",
                      name[0] === t.axis && "outline outline-[#444]"
                    )}
                  >
                    <span
                      className={clsx(
                        "flex h-full items-center justify-center",
                        name[0] === t.axis && "outline outline-dotted outline-black"
                      )}
                    >
                      {name}
                    </span>
                  </button>
                ))}
              </div>
            </fieldset>
          </div>
          <button disabled className={`${raised} mt-[10px] ml-[13px] h-[34px] text-[#a0a0a0]`}>
            SAVE AXIS SETTINGS
          </button>
          <div className="mt-[15px] ml-[9px] flex gap-[5px]">
            <button className={`${raised} h-[22px] flex-1`}>Cancel</button>
            <button className={`${raised} h-[22px] flex-1`}>OK</button>
          </div>
        </div>
      </div>
    </Frame>
  );
}

/* ---------- Mach3 main screen ---------- */

const panel =
  "border-2 border-t-[#e9e6df] border-l-[#b9b5ab] border-r-[#8d897f] border-b-[#8d897f] bg-[#d4d0c8]";
const chip =
  "border border-t-[#fafafa] border-l-[#fafafa] border-r-[#6f6f6f] border-b-[#6f6f6f] bg-linear-to-br from-[#f1f1f1] via-[#dedede] to-[#b4b4b4] font-bold whitespace-nowrap shadow-[1px_1px_0_#8a8a8a]";
const steel =
  "rounded-[2px] border-[4px] border-t-[#8c8c8c] border-l-[#8c8c8c] border-r-[#4e4e4e] border-b-[#4e4e4e] bg-[radial-gradient(#ededed_20%,#b2b2b2_100%)] leading-[17px] whitespace-nowrap";
const led = "bg-[#3c3826] border border-t-[#777] border-l-[#777] border-r-[#222] border-b-[#222]";
const header =
  "flex h-[30px] items-center justify-center border-2 border-t-[#5b5d98] border-l-[#5b5d98] border-r-[#b5b7e0] border-b-[#b5b7e0] bg-[#7f82c4] text-[18px] font-semibold whitespace-nowrap";
const redField = "bg-linear-to-br from-[#e8b4b4] via-[#dc9a9c] to-[#b98486] text-right text-[#5e0f18]";
const yellowField = "bg-linear-to-br from-[#e3e3b0] via-[#d2d28c] to-[#a8a878] px-[8px] text-right text-[#3e3e10]";
const blueField = "bg-linear-to-br from-[#b0b0dc] via-[#9698cc] to-[#7c7ea8] px-[6px] text-right text-[#10104e]";
const inset =
  "border-[4px] border-t-[#3c3a34] border-l-[#a8a49b] border-r-[#e4e1da] border-b-[#e9e6df] bg-[#d4d0c8]";

function Led({ on }: { on?: boolean }) {
  return (
    <span
      className={clsx(
        "h-[16px] w-[16px] shrink-0 border border-t-[#999] border-l-[#999] border-r-white border-b-white",
        on ? "bg-linear-to-b from-[#1b35e8] to-[#5d86ff]" : "bg-linear-to-b from-[#0a0a14] to-[#43434f]"
      )}
    />
  );
}

function Dro({ axis, value, last }: { axis: string; value: string; last?: boolean }) {
  return (
    <div className="flex h-[49px] items-start">
      <button className={`${segoe} flex h-[48px] w-[42px] flex-col border-2 border-[#f01414] bg-black p-[1px] font-semibold`}>
        <span className="flex w-full flex-1 flex-col items-center justify-center border-[3px] border-[#8c8c8c] bg-[#dcdcdc] text-[12px] leading-[14px]">
          Zero
          <span className="text-[17px] leading-[18px]">{axis}</span>
        </span>
      </button>
      <input
        readOnly
        aria-label={`${axis} position`}
        value={value}
        className="mt-[2px] ml-[10px] h-[44px] w-[203px] border-[4px] border-t-[#333] border-r-[#8b8b86] border-b-[#e6e4de] border-l-[#5a5a5a] bg-linear-to-br from-[#b9d8b6] via-[#9ccf9c] to-[#8fb48f] px-[8px] text-right text-[32px] leading-[36px] text-[#0a3a12]"
      />
      {last ? (
        <div className="mt-[2px] ml-[4px] flex h-[44px] w-[69px] items-center justify-between border-2 border-t-[#eee] border-r-[#777] border-b-[#777] border-l-[#eee] bg-[#d4d0c8] pr-[10px] pl-px">
          <span className={`${segoe} text-center text-[11px] leading-[14px] font-semibold`}>Radius<br />Correct</span>
          <span className={`${led} h-[36px] w-[7px]`} />
        </div>
      ) : (
        <div className="mt-[2px] ml-[4px] flex h-[44px] w-[69px] flex-col justify-between border-2 border-t-[#eee] border-r-[#777] border-b-[#777] border-l-[#eee] bg-[#d4d0c8]">
          <div className="flex items-center justify-between">
            <span className={`${segoe} pl-px text-[11px] leading-[13px] font-semibold`}>Scale</span>
            <span className={`${led} h-[9px] w-[29px]`} />
          </div>
          <span className="text-right text-[16px] leading-[24px]">+1.0000</span>
        </div>
      )}
    </div>
  );
}

function Mach3({ dro, unitsMin, className }: { dro: string; unitsMin: string; className?: string }) {
  return (
    <Frame
      title="Mach3 CNC Control Application"
      full
      header="bg-[linear-gradient(90deg,#c7dbe9_0%,#a7c6e2_6%,#c9c7a6_10%,#a9c9ec_13%,#a3c6ee_24%,#8fb0d8_26%,#b0cff0_34%,#a9a3a3_35%,#b0cff0_37%,#9fc3e2_52%,#b4d2f0_62%,#96b8dc_66%,#a3c6ea_68%,#b08088_70%,#c7b988_71%,#b0cff0_74%,#a9b8c8_80%,#c9b8cc_83%,#d0c99a_85%,#b7c8d6_88%,#8aa4b8_100%)]"
      frame="bg-linear-to-b from-[#7fa3b8] via-[#c8dcec] to-[#9cbfe4]"
      className={clsx("h-[760px] w-[1049px]", className)}
      icon={
        <svg viewBox="0 0 16 16" className="mt-[6px] mr-[6px] h-[16px] w-[16px] bg-[#333]">
          <path d="M3 2h3v7l6-5v6l-5 5-5-5z" fill="#ccc" />
        </svg>
      }
    >
      <nav className={`${segoe} flex h-[21px] shrink-0 items-center gap-[15px] border-b border-[#aab] bg-linear-to-b from-white to-[#dbe1f2] pl-[7px] text-[11px]`}>
        {["File", "Config", "View", "Wizards", "Operator", "Help"].map((m) => (
          <a key={m} href={`#${m}`}>{m}</a>
        ))}
      </nav>
      <div className={`${arial} mr-[8px] flex flex-1 flex-col gap-[2px] bg-[#0b0b0b] pl-[2px] text-[13px]`}>
        <div className="-ml-[2px] flex h-[35px] items-start gap-[2px] border-t border-white bg-linear-to-b from-[#d4d0c8] from-70% to-[#6b6860] pt-[5px] pl-px">
          <button className={`${chip} h-[21px] w-[122px] text-[11px]`}>Program Run Alt-1</button>
          <button className={`${chip} h-[21px] w-[63px]`}>MDI Alt2</button>
          <button className={`${chip} h-[21px] w-[89px] text-[11px]`}>ToolPath Alt4</button>
          <button className={`${chip} ml-[3px] h-[21px] w-[80px] text-[12px]`}>Offsets Alt5</button>
          <button className={`${chip} ml-[2px] h-[21px] w-[90px] text-[12px]`}>Settings Alt6</button>
          <button className={`${chip} ml-[2px] h-[21px] w-[121px] text-[12px]`}>Diagnostics Alt-7</button>
          <span className="mr-[12px] ml-auto w-[332px] overflow-hidden text-[14px] leading-[26px] whitespace-pre">
            {"Mill->G15  G80 G10 G17 G40 G21 G90 G94 G54 G49"}
          </span>
        </div>

        <div className="flex h-[270px]">
          <div className="mr-[3px] w-[409px] border-r-[8px] border-b-[10px] border-r-[#3a3a3a] border-b-[#999] bg-black pt-[14px] pr-[8px] pb-[4px] pl-[15px]">
            <div className="flex h-[241px] border-2 border-white">
              <ol className="flex-1 overflow-hidden bg-[#abb9a7] pt-px">
                {Array.from({ length: 10 }, (_, i) => (
                  <li
                    key={i}
                    className={clsx("flex h-[23px] items-center pl-[6px] text-[21px]", i === 5 && "bg-white")}
                  >
                    .................
                  </li>
                ))}
              </ol>
              <div className="flex w-[16px] flex-col items-center bg-[#ececec] py-[5px] text-[7px] leading-[9px]">
                <span>▲</span>
                <span className="mt-[4px] h-[15px] w-[13px] border border-[#999] bg-white" />
                <span className="mt-auto">▼</span>
              </div>
            </div>
          </div>

          <div className="w-[376px] border-2 border-[#8a8c96] bg-linear-to-b from-[#08082c] via-[#2b2b80] via-50% to-[#d8d8ec]">
            <div className="flex pt-[4px] pl-[5px]">
              <button className="flex h-[200px] w-[26px] flex-col items-center justify-between border-2 border-[#555] bg-linear-to-r from-[#777] via-[#c5c5c5] to-[#777] py-[6px] font-['Open_Sans'] text-[15px] leading-[16px] font-semibold">
                {"REF ALL HOME".split("").map((c, i) => (
                  <span key={i} className="block min-h-[7px]">{c.trim()}</span>
                ))}
              </button>
              <div className="ml-[9px] flex flex-col gap-[2px]">
                <Dro axis="X" value={dro} />
                <Dro axis="Y" value="+0.0000" />
                <Dro axis="Z" value="+0.0000" />
                <Dro axis="4" value="+0.0000" last />
              </div>
            </div>
            <div className={`${segoe} mt-[2px] flex items-center pl-px text-[13px] font-semibold whitespace-nowrap`}>
              <button className={`${steel} h-[47px] w-[60px] text-[11px] outline-2 -outline-offset-1 outline-[#222]`}>OFFLINE</button>
              <button className={`${steel} ml-[7px] h-[43px] w-[57px] text-[11px]`}>GOTO Z</button>
              <button className="ml-[6px] h-[47px] w-[62px] border-[3px] border-[#33332a] bg-[#ececec]">To Go</button>
              <button className={`${steel} ml-[6px] h-[51px] w-[72px] outline-2 -outline-offset-1 outline-[#3a1414]`}>Machine<br />Coord's</button>
              <button className={`${steel} ml-[10px] h-[46px] w-[79px] outline-2 -outline-offset-1 outline-[#10e030]`}>Soft<br />Limits</button>
            </div>
          </div>

          <div className="ml-[3px] flex-1 border-r-[8px] border-b-[10px] border-r-[#3a3a3a] border-b-[#999] bg-black pt-[12px] pr-[7px] pl-[11px]">
            <div className="h-[245px] overflow-hidden border-2 border-white pt-[6px]">
              <p className="pl-[3px] text-[14px] leading-[20px] font-bold whitespace-pre text-white">
                {"Tool:0   Job Display - Redraw"}
              </p>
              <div className="mt-[13px] ml-[19px] h-[163px] w-[164px] border-[3px] border-[#fb0000]" />
            </div>
          </div>
        </div>

        <div className="flex h-[57px] gap-[3px] pr-[2px] pl-[2px]">
          <div className={`${panel} flex w-[556px] items-center pl-[8px]`}>
            <label htmlFor={`file${dro}`} className={`${segoe} mr-[2px] text-[19px] font-semibold`}>File:</label>
            <input id={`file${dro}`} readOnly value="No File Loaded." className={`${inset} h-[30px] w-[492px] text-[16px]`} />
          </div>
          <div className={`${panel} flex flex-1 flex-wrap content-center gap-x-[3px] gap-y-[3px] px-[2px]`}>
            <button className={`${chip} h-[20px] w-[108px]`}>Load Wizards</button>
            <button className={`${chip} h-[20px] w-[107px]`}>Last Wizard</button>
            <button className={`${chip} h-[20px] w-[108px] text-[12px]`}>Conversational</button>
          </div>
          <div className={`${panel} ${segoe} flex w-[231px] items-end justify-between px-[2px] pb-[5px] text-[13px] font-semibold`}>
            <button className={`${steel} h-[41px] w-[71px]`}>Regen.<br />Toolpath</button>
            <button className={`${steel} h-[41px] w-[71px]`}>Display<br />Mode</button>
            <div className="flex w-[71px] flex-col items-center">
              <span className="mb-[2px] h-[6px] w-[50px] bg-[#203a2a]" />
              <button className={`${steel} h-[41px] w-full`}>Jog<br />Follow</button>
            </div>
          </div>
        </div>

        <div className="flex h-[261px] gap-[3px] pr-[2px] pl-[2px]">
          <div className="flex w-[412px] flex-col gap-[2px]">
            <div className={`${panel} flex h-[188px]`}>
              <div className={`${segoe} ml-[5px] flex w-[87px] flex-col items-center pt-[9px] text-[12px] leading-[17px] font-semibold`}>
                <button className="h-[59px] w-[87px] border-[3px] border-black bg-[#3cb35a] p-[2px] whitespace-nowrap">
                  <span className="block h-full border-4 border-[#127a1e] bg-[radial-gradient(#dcdcd4_35%,#a3c4a3)] pt-[4px]">
                    Cycle Start<br />&lt;Alt-R&gt;
                  </span>
                </button>
                <button className="mt-[3px] h-[49px] w-[81px] border-[5px] border-[#f0ea00] bg-[radial-gradient(#dcd8c8_30%,#d8d860)] whitespace-nowrap outline outline-[#555]">
                  Feed Hold<br />&lt;Spc&gt;
                </button>
                <button className="mt-[7px] h-[51px] w-[81px] border-[5px] border-[#f01010] bg-[radial-gradient(#dcd4cc_30%,#e87070)] outline outline-[#555]">
                  Stop<br />&lt;Alt-S&gt;
                </button>
              </div>
              <div className="ml-[24px] flex w-[115px] flex-col gap-[3px] pt-[2px]">
                <button className={`${chip} h-[20px]`}>Edit G-Code</button>
                <button className={`${chip} h-[20px]`}>Recent File</button>
                <button className={`${chip} h-[20px]`}>Close G-Code</button>
                <button className={`${chip} h-[20px]`}>Load G-Code</button>
                <button className={`${chip} mt-[15px] h-[20px]`}>Set Next Line</button>
                <label className="flex h-[20px] items-center text-[18px]">
                  Line
                  <input readOnly value="0" className="ml-[5px] h-[20px] w-full border-r border-b border-[#888] text-right" />
                </label>
                <button className={`${chip} h-[20px]`}>Run From Here</button>
              </div>
              <div className="ml-[36px] flex flex-col gap-[3px] pt-[2px]">
                {[
                  ["Rewind Ctrl-W", "none", "h-[20px]"],
                  ["Single BLK Alt-N", "off", "h-[20px] text-[12px]"],
                  ["Reverse Run", "off", "mb-[22px] h-[20px]"],
                  ["Block Delete", "off", "h-[20px]"],
                  ["M1 Optional Stop", "on", "h-[20px] text-[11px]"],
                  ["Flood Ctrl-F", "off", "h-[20px]"],
                ].map(([name, state, size]) => (
                  <div key={name} className="flex items-start gap-[3px]">
                    <button className={clsx(chip, "w-[116px]", size)}>{name}</button>
                    {state !== "none" && (
                      <span className="mt-[4px] flex">
                        <Led on={state === "on"} />
                      </span>
                    )}
                  </div>
                ))}
                <div className="flex gap-[7px] pl-[2px] text-[15px] leading-[18px]">
                  <span className="w-[52px] border-2 border-[#4a463a] text-center">Dwell</span>
                  <span className="w-[75px] border-2 border-[#20cc30] text-center text-[14px]">CV Mode</span>
                </div>
              </div>
            </div>
            <div className={`${panel} flex flex-1 items-end pb-[5px]`}>
              <button className={`${segoe} -mb-[4px] h-[66px] w-[163px] border-[5px] border-[#1fd83a] bg-black p-[2px] text-[25px] leading-[36px] font-semibold text-[#dfe8ea]`}>
                <span className="flex h-full items-center justify-center border-[5px] border-[#f80000] bg-[#ae0810] outline outline-white">
                  Reset
                </span>
              </button>
              <button className={`${chip} ml-[8px] h-[20px] w-[71px] text-[12px]`}>G-Codes</button>
              <button className={`${chip} ml-[5px] h-[20px] w-[70px] text-[12px]`}>M-Codes</button>
            </div>
          </div>

          <div className={`${panel} flex w-[197px] flex-col px-[7px] pt-[2px]`}>
            <h3 className={`${segoe} ${header} mx-[1px]`}>Tool Information</h3>
            <div className="mt-[4px] flex h-[34px] items-center">
              <span className="w-[53px] text-[20px]">Tool</span>
              <span className={`${redField} h-[32px] w-[66px] px-[10px] text-[22px] leading-[34px]`}>0</span>
              <div className="ml-[5px] flex w-[48px] flex-col items-center text-[11px] leading-[11px]">
                Change
                <span className={`${led} h-[12px] w-full`} />
                Tool
              </div>
            </div>
            <div className="mt-[4px] flex items-center">
              <span className="w-[45px] text-[21px] leading-[23px]">Dia.</span>
              <span className={`${redField} h-[23px] w-[92px] px-[5px] text-[21px] leading-[24px]`}>+0.0000</span>
            </div>
            <div className="mt-[4px] flex items-center">
              <span className="w-[45px] pl-[15px] text-[21px] leading-[23px]">H</span>
              <span className={`${redField} h-[23px] w-[92px] px-[5px] text-[21px] leading-[24px]`}>+0.0000</span>
            </div>
            <button className={`${chip} mt-[12px] ml-[21px] h-[19px] w-[120px] text-[13px] leading-[16px]`}>Auto Tool Zero</button>
            <div className="mt-[8px] ml-[11px] flex gap-[4px] text-[13px]">
              <button className={`${chip} h-[18px] w-[83px] leading-[14px]`}>Remember</button>
              <button className={`${chip} h-[18px] w-[60px] leading-[14px]`}>Return</button>
            </div>
            <div className="mt-[6px] ml-[9px] flex items-center">
              <span className="w-[52px] text-[13px]">Elapsed</span>
              <span className={`${redField} h-[23px] w-[93px] px-[8px] text-[21px] leading-[24px]`}>00:00:00</span>
            </div>
            <button className={`${chip} mt-[9px] ml-[13px] h-[21px] w-[157px] text-[11px] outline-[3px] outline-[#12e03a]`}>
              Jog ON/OFF Ctrl-Alt-J
            </button>
          </div>

          <div className="flex flex-1 flex-col gap-[2px]">
            <div className="flex h-[190px] gap-[2px]">
              <div className={`${panel} flex w-[200px] flex-col pt-[2px]`}>
                <h3 className={`${segoe} ${header} mr-[17px] ml-[11px]`}>Feed Rate</h3>
                <div className="mt-[3px] flex items-center justify-between pr-[4px] pl-[25px] leading-[15px]">
                  <span className="h-[9px] w-[100px] border border-[#8a7070] bg-[#5c3a3a]" />
                  FRO %
                </div>
                <div className="flex">
                  <div className="w-[154px]">
                    <div className="mt-[4px] flex w-[137px] items-center justify-between pl-[9px]">
                      <span className="text-[17px] leading-[20px]">FRO</span>
                      <span className={`${yellowField} h-[20px] w-[86px] text-[18px] leading-[22px]`}>6.00</span>
                    </div>
                    <div className="mt-[5px] flex w-[137px] items-center justify-between pl-[9px]">
                      <span className="text-[17px] leading-[20px]">F</span>
                      <span className={`${yellowField} ml-[2px] h-[20px] w-[114px] text-[18px] leading-[22px]`}>6.00</span>
                    </div>
                    <div className="mt-[4px] flex items-center pl-[35px]">
                      <span className={`${yellowField} h-[21px] w-[53px] text-[18px] leading-[22px]`}>100</span>
                      <span className="ml-[6px] text-[16px] leading-[20px]">%</span>
                      <button className="ml-[15px] h-[25px] w-[27px] rounded-full border border-[#444] bg-[#e6e6e6] text-[9px]">
                        <span className="-mx-[6px]">Reset</span>
                      </button>
                    </div>
                    <div className="mt-[3px] flex w-[154px] items-center">
                      <span className="w-[61px] text-[14px]">Units/Min</span>
                      <span className={`${yellowField} h-[21px] w-[93px] text-[18px] leading-[22px]`}>{unitsMin}</span>
                    </div>
                    <div className="mt-[5px] flex w-[154px] items-center">
                      <span className="w-[71px] text-[14px]">Units/Rev</span>
                      <span className={`${yellowField} h-[21px] w-[83px] text-[18px] leading-[22px]`}>0.00</span>
                    </div>
                  </div>
                  <div className="mr-[8px] flex flex-1 flex-col items-start border-r border-white">
                    <span className="mt-[6px] ml-[5px] text-[13px] leading-[18px]">100</span>
                    <span className="mt-auto ml-[6px] h-[43px] w-[22px] bg-linear-to-r from-[#0cc84a] via-[#35f575] to-[#0aa83a]" />
                  </div>
                </div>
              </div>

              <div className={`${panel} flex flex-1 flex-col pt-[3px] pl-[12px]`}>
                <h3 className={`${segoe} ${header} mr-[12px]`}>Spindle Speed</h3>
                <div className="flex">
                  <div className="w-[124px] pt-[12px] text-[17px] leading-[20px]">
                    <button className={`${chip} ml-[7px] h-[21px] w-[112px] text-[11px] leading-[18px] outline-[3px] outline-[#3a3628]`}>
                      Spindle CW F5
                    </button>
                    <div className="mt-[13px] flex items-center">
                      <span className="w-[45px]">RPM</span>
                      <span className={`${blueField} h-[20px] w-[71px] leading-[22px]`}>0</span>
                    </div>
                    <div className="mt-[10px] flex items-center">
                      <span className="w-[34px] pl-[4px]">S</span>
                      <span className={`${blueField} h-[20px] w-[82px] leading-[22px]`}>0</span>
                    </div>
                    <div className="mt-[10px] flex items-center">
                      <span className="w-[73px] text-[15px]">Increment</span>
                      <span className={`${blueField} h-[23px] w-[38px] text-[19px] leading-[25px]`}>10</span>
                    </div>
                  </div>
                  <div className="flex flex-1 flex-col items-center pt-[4px]">
                    <svg viewBox="0 0 36 34" className="h-[34px] w-[36px]">
                      <path d="M18 0l17 17h-5v17H6V17H1z" fill="#000" />
                      <path d="M18 14v14M11 21h14" stroke="#fff" strokeWidth="3" />
                    </svg>
                    <button className="mt-[6px] h-[40px] w-[38px] rounded-full border-2 border-[#444] bg-[radial-gradient(#fff,#bbb)] text-[13px] leading-[14px]">
                      <span className="-mx-[4px]">Reset</span>
                    </button>
                    <svg viewBox="0 0 36 34" className="mt-[6px] h-[34px] w-[36px]">
                      <path d="M18 34l17-17h-5V0H6v17H1z" fill="#000" />
                      <path d="M13 15h10" stroke="#fff" strokeWidth="3" />
                    </svg>
                  </div>
                </div>
              </div>
            </div>

            <div className={`${panel} flex flex-1`}>
              <div className="flex w-[75px] flex-col items-start pl-[12px]">
                <span className={`${led} h-[10px] w-[50px]`} />
                <button className={`${chip} mt-[1px] h-[16px] w-[47px] text-[12px] leading-[13px]`}>On/Off</button>
                <span className="text-[13px] leading-[15px]">Z Inhibit</span>
                <span className="w-[61px] border-r border-b border-[#888] text-right text-[15px] leading-[17px]">+0.000</span>
              </div>
              <div className="flex-1">
                <div className="flex h-[30px] items-center text-[13px] whitespace-nowrap">
                  <button className={`${chip} h-[20px] w-[101px]`}>MultiPass</button>
                  <span className="ml-[4px] text-[20px]">L</span>
                  <span className="ml-[3px] text-[17px]">(Loop)</span>
                  <span className="ml-[4px] border-r border-b border-[#888] text-[22px] leading-[26px]">+0</span>
                  <span className="ml-[4px] text-[15px]">Times on M30</span>
                  <span className="ml-[2px] h-[16px] w-[16px] shrink-0 bg-[#26402c]" />
                </div>
                <div className="mt-[6px] flex items-center pl-[43px] text-[14px] leading-[18px] whitespace-nowrap">
                  Lower Z Inhibit by
                  <span className="mx-[4px] w-[68px] border-r border-b border-[#888] text-right text-[15px]">+0.0000</span>
                  on each pass
                </div>
              </div>
            </div>
          </div>
        </div>

        <div className="-ml-[2px] flex flex-1 items-start bg-linear-to-b from-[#cfd0e6] via-[#4c4ca0] via-55% to-[#16165c] pt-[10px] pl-[8px]">
          <button className={`${chip} mt-[4px] h-[20px] w-[60px] text-[12px]`}>History</button>
          <button className={`${chip} mt-[4px] ml-[4px] h-[20px] w-[49px] text-[12px]`}>Clear</button>
          <label htmlFor={`status${dro}`} className={`${segoe} w-[63px] text-[18px] leading-[26px] font-semibold`}>Status:</label>
          <input id={`status${dro}`} readOnly value="" className={`${inset} h-[30px] w-[429px]`} />
          <label htmlFor={`profile${dro}`} className={`${segoe} ml-[7px] w-[67px] text-[18px] leading-[26px] font-semibold`}>Profile:</label>
          <input id={`profile${dro}`} readOnly value="Mach3Mill" className={`${inset} h-[30px] w-[324px] text-[17px]`} />
        </div>
      </div>
    </Frame>
  );
}

function Caption({ className, children }: { className: string; children: React.ReactNode }) {
  return (
    <p className={clsx("font-['Lato',sans-serif] text-[30px] leading-[36px] whitespace-nowrap text-black", className)}>
      {children}
    </p>
  );
}

export default function App() {
  return (
    <main className="overflow-hidden bg-white">
      <DeviceManager />
      <Caption className="mt-[1px] pl-[50px]">LPT settings in Windows:</Caption>
      <div className="mt-[6px]">
        <PropertySheets />
      </div>
      <Caption className="mt-[6px] pl-[21px]">Mach3 settings:</Caption>
      <div className="mt-[19px] flex items-start gap-[26px] pl-[2px]">
        <PortSetup />
        <MotorOutputs />
      </div>
      <div className="mt-[63px] flex gap-[31px] pl-[5px]">
        {tunings.map((t) => (
          <MotorTuning key={t.axis} t={t} />
        ))}
      </div>
      <Caption className="mt-[37px] pl-[32px]">Main window mach3 after setup settings:</Caption>
      <div className="mt-[10px] overflow-hidden">
        <Mach3 dro="+0.0000" unitsMin="0.00" className="-ml-[23px]" />
      </div>
      <Caption className="mt-[28px] pl-[38px]">
        Two times pressed pressed the left arrow key on the keyboard
      </Caption>
      <div className="mt-[17px] h-[736px] overflow-hidden pl-px">
        <Mach3 dro="-0.0025" unitsMin="0.07" />
      </div>
      <Caption className="mt-[19px] -mb-[20px] h-[36px] overflow-hidden pl-[47px]">
        And if you will continue press the left button the X-coordinate will be decreased -0.0025 after each second or third click
      </Caption>
    </main>
  );
}
